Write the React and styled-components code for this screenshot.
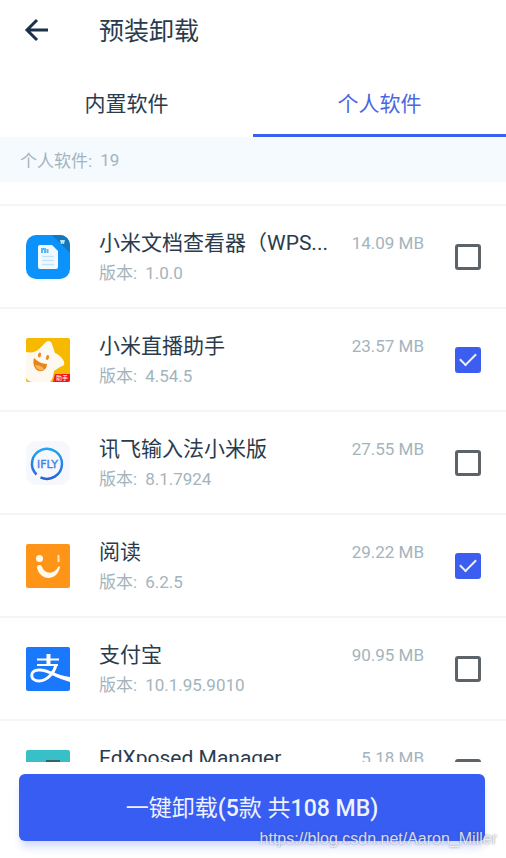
import { useState } from "react";
import styled, { createGlobalStyle } from "styled-components";

const GlobalStyle = createGlobalStyle`
  * {
    box-sizing: border-box;
  }

  body {
    margin: 0;
    background: #fff;
    color: #2a3b4d;
    font-family: Roboto, "Noto Sans CJK SC", sans-serif;
  }

  button {
    font-family: inherit;
  }
`;

const Page = styled.main`
  position: relative;
  display: flex;
  flex-direction: column;
  height: 100vh;
  overflow: hidden;
`;

const Header = styled.header`
  display: flex;
  align-items: center;
  gap: 50px;
  height: 60px;
  padding: 0 24px;
`;

const BackButton = styled.button`
  display: flex;
  padding: 0;
  border: none;
  background: none;
  color: #1c3049;
  cursor: pointer;
`;

const Title = styled.h1`
  margin: 0;
  padding-top: 4px;
  font-size: 25px;
  font-weight: 400;
  line-height: 36px;
`;

const Tabs = styled.nav`
  display: flex;
  height: 77px;
`;

const Tab = styled.button`
  flex: 1;
  padding: 14px 0 4px;
  border: none;
  border-bottom: 3px solid ${(props) => (props.$active ? "#3b5df0" : "transparent")};
  background: none;
  color: ${(props) => (props.$active ? "#4a68e0" : "#2a3b4d")};
  font-size: 21px;
  cursor: pointer;
`;

const Summary = styled.p`
  display: flex;
  align-items: center;
  gap: 8px;
  height: 45px;
  margin: 0;
  padding: 0 20px;
  background: #f5fafe;
  color: #a3b4bc;
  font-size: 17px;
`;

const List = styled.ul`
  flex: 1;
  min-height: 0;
  margin: 0;
  padding: 22px 0 0;
  overflow: hidden;
  list-style: none;
`;

const Row = styled.li`
  display: flex;
  align-items: center;
  height: 103px;
  padding: 0 25px 0 26px;
  border-top: 2px solid #f3f5f6;
`;

const AppIcon = styled.svg`
  flex: none;
  width: 44px;
  height: 44px;
  margin-right: 29px;
`;

const Info = styled.label`
  display: grid;
  flex: 1;
  grid-template-columns: minmax(0, 1fr) auto;
  column-gap: 20px;
  align-items: center;
  min-width: 0;
  padding-top: 3px;
  line-height: 30px;
`;

const Name = styled.span`
  overflow: hidden;
  font-size: 21px;
  text-overflow: ellipsis;
  white-space: nowrap;
`;

const Size = styled.span`
  color: #a3b4bc;
  font-size: 17px;
`;

const Version = styled.span`
  display: flex;
  gap: 8px;
  color: #a3b4bc;
  font-size: 17px;
`;

const Checkbox = styled.input`
  display: grid;
  flex: none;
  place-items: center;
  width: 26px;
  height: 26px;
  margin: 0 0 0 31px;
  border: 3px solid #5c6369;
  border-radius: 3px;
  appearance: none;
  cursor: pointer;

  &:checked {
    border-color: #3b5df0;
    background: #3b5df0;
  }

  &:checked::before {
    content: "";
    width: 14px;
    height: 7px;
    border: solid #eef2ff;
    border-width: 0 0 2px 2px;
    transform: translateY(-2px) rotate(-45deg);
  }
`;

const Footer = styled.footer`
  padding: 12px 21px 17px 19px;
`;

const UninstallButton = styled.button`
  display: block;
  width: 100%;
  height: 67px;
  padding: 0 0 4px;
  border: none;
  border-radius: 6px;
  background: #385df2;
  box-shadow: 0 8px 8px -2px #d5dcfb;
  color: #eef2ff;
  font-size: 23px;
  cursor: pointer;

  strong {
    font-weight: 500;
  }
`;

const Watermark = styled.span`
  position: absolute;
  right: 9px;
  bottom: 8px;
  color: rgba(255, 255, 255, 0.8);
  font-family: "Liberation Sans", sans-serif;
  font-size: 16px;
  line-height: 22px;
  text-shadow: 0 0 2px rgba(60, 70, 100, 0.7);
  pointer-events: none;
`;

function BackArrow() {
  return (
    <svg width="25" height="24" viewBox="0 0 25 24" fill="none" stroke="currentColor" strokeWidth="3">
      <path d="M24 12H3M13 2L3 12l10 10" />
    </svg>
  );
}

function DocsIcon() {
  return (
    <AppIcon viewBox="0 0 44 44" aria-hidden="true">
      <rect width="44" height="44" rx="10" fill="#0c93fb" />
      <path d="M26 0h8a10 10 0 0 1 10 10v8z" fill="#1578bd" />
      <path d="M34 5h5l-1 4h-1l-.5-1-.5 1h-1z" fill="#b9e4f5" />
      <path d="M14 10h12l6 6v16a2 2 0 0 1-2 2H14a2 2 0 0 1-2-2V12a2 2 0 0 1 2-2z" fill="#f3faff" />
      <path d="M16 18v-4h3v4M21.500 14v4" stroke="#57b8f8" strokeWidth="2" fill="none" />
      <path d="M16 21.500h12M16 25.500h12M16 29.500h12" stroke="#c2e2fb" strokeWidth="1.500" />
    </AppIcon>
  );
}

function StarIcon() {
  return (
    <AppIcon viewBox="0 0 44 44" aria-hidden="true">
      <rect width="44" height="44" rx="2" fill="#f6b900" />
      <path
        d="M0 14c6 1 10 0 13-3l7-7c2-2 5-1 6 2l3 9c5 2 8 6 9 9 1 3-1 4-4 5l-6 4c-1 5-1 8-4 11H6c-3-1-5-2-6-4z"
        fill="#fdf9f0"
      />
      <ellipse cx="13.500" cy="17" rx="1.500" ry="2.500" fill="#e98a2c" transform="rotate(15 13.500 17)" />
      <ellipse cx="21.500" cy="19.500" rx="1.500" ry="2.500" fill="#e98a2c" transform="rotate(15 21.500 19.500)" />
      <path d="M8 20c3 3 8 6 13 6 0 5-4 8-8 7-4-1-7-7-5-13z" fill="#e8861c" />
      <path d="M9 27c4 0 7 1 9 4-3 3-7 1-9-4z" fill="#fbb552" />
      <path d="M29 36h15v6a2 2 0 0 1-2 2H27z" fill="#f5190d" />
      <text x="30" y="42" fontSize="6" fill="#fff">
        助手
      </text>
    </AppIcon>
  );
}

function IflyIcon() {
  return (
    <AppIcon viewBox="0 0 44 44" aria-hidden="true">
      <defs>
        <linearGradient id="ifly" x1="0" y1="0" x2="0" y2="1">
          <stop offset="0" stopColor="#22a5ee" />
          <stop offset="1" stopColor="#2763d8" />
        </linearGradient>
      </defs>
      <rect width="44" height="44" rx="10" fill="#f6f8fe" />
      <path d="M10.500 33.500A15 15 0 1 1 14.500 36.300" fill="none" stroke="url(#ifly)" strokeWidth="2.500" />
      <text
        x="21.500"
        y="27"
        fontFamily="DejaVu Sans"
        fontSize="11"
        textAnchor="middle"
        fill="#3f83e6"
        stroke="#3f83e6"
        strokeWidth="0.400"
      >
        iFLY
      </text>
    </AppIcon>
  );
}

function ReaderIcon() {
  return (
    <AppIcon viewBox="0 0 44 44" aria-hidden="true">
      <rect width="44" height="44" rx="2" fill="#ff9518" />
      <circle cx="13.500" cy="14.500" r="3.500" fill="#fffaf0" />
      <path d="M32.500 11v7" stroke="#ffe2b8" strokeWidth="2" />
      <path d="M11 23c0-2 4-3 5 0 3 8 13 7 16 0 1-1 2-1 2 0-3 15-21 14-23 0z" fill="#fffaf0" />
    </AppIcon>
  );
}

function AlipayIcon() {
  return (
    <AppIcon viewBox="0 0 44 44" aria-hidden="true">
      <rect width="44" height="44" rx="2" fill="#1a78fd" />
      <g fill="none" stroke="#fff">
        <path d="M11 12.500h22M11 18h21" strokeWidth="2" />
        <path d="M22.500 7v11" strokeWidth="4" />
        <path d="M30 18c-2 8-9 16-17 16-9 0-10-10-1-11 7-1 13 3 20 6" strokeWidth="3" />
      </g>
      <path d="M27 25c6 3 11 4 17 5v5c-6-2-12-4-18-7z" fill="#fff" />
    </AppIcon>
  );
}

function XposedIcon() {
  return (
    <AppIcon viewBox="0 0 44 44" aria-hidden="true">
      <rect width="44" height="44" rx="2" fill="#38c0c9" />
      <path d="M20 10h14v14H20z" fill="#3b6068" />
    </AppIcon>
  );
}

const apps = [
  { id: 1, name: "小米文档查看器（WPS...", version: "1.0.0", size: "14.09 MB", Icon: DocsIcon },
  { id: 2, name: "小米直播助手", version: "4.54.5", size: "23.57 MB", Icon: StarIcon },
  { id: 3, name: "讯飞输入法小米版", version: "8.1.7924", size: "27.55 MB", Icon: IflyIcon },
  { id: 4, name: "阅读", version: "6.2.5", size: "29.22 MB", Icon: ReaderIcon },
  { id: 5, name: "支付宝", version: "10.1.95.9010", size: "90.95 MB", Icon: AlipayIcon },
  { id: 6, name: "EdXposed Manager", size: "5.18 MB", Icon: XposedIcon },
];

function AppRow({ app, checked, onToggle }) {
  const { id, name, version, size, Icon } = app;

  return (
    <Row>
      <Icon />
      <Info htmlFor={`app-${id}`}>
        <Name>{name}</Name>
        <Size>{size}</Size>
        <Version>
          <span>版本:</span>
          <span>{version}</span>
        </Version>
      </Info>
      <Checkbox type="checkbox" id={`app-${id}`} checked={checked} onChange={() => onToggle(id)} />
    </Row>
  );
}

export default function App() {
  const [selected, setSelected] = useState([2, 4]);

  function handleToggle(id) {
    setSelected((prev) => (prev.includes(id) ? prev.filter((item) => item !== id) : [...prev, id]));
  }

  return (
    <>
      <GlobalStyle />
      <Page>
        <Header>
          <BackButton aria-label="返回">
            <BackArrow />
          </BackButton>
          <Title>预装卸载</Title>
        </Header>
        <Tabs>
          <Tab>内置软件</Tab>
          <Tab $active>个人软件</Tab>
        </Tabs>
        <Summary>
          <span>个人软件:</span>
          <span>19</span>
        </Summary>
        <List>
          {apps.map((app) => (
            <AppRow key={app.id} app={app} checked={selected.includes(app.id)} onToggle={handleToggle} />
          ))}
        </List>
        <Footer>
          <UninstallButton>
            一键卸载<strong>(5</strong>款 共<strong>108 MB)</strong>
          </UninstallButton>
        </Footer>
        <Watermark>https://blog.csdn.net/Aaron_Miller</Watermark>
      </Page>
    </>
  );
}
